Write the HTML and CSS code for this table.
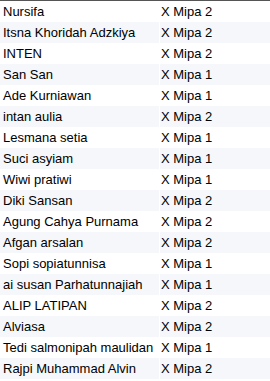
FILE: index.html
```html
<!DOCTYPE html>
<html>
<head>
<meta charset="utf-8">
<link rel="stylesheet" href="styles.css">
</head>
<body>
<div class="table">
  <div class="row"><div class="cell name">Nursifa</div><div class="cell cls">X Mipa 2</div></div>
  <div class="row"><div class="cell name">Itsna Khoridah Adzkiya</div><div class="cell cls">X Mipa 2</div></div>
  <div class="row"><div class="cell name">INTEN</div><div class="cell cls">X Mipa 2</div></div>
  <div class="row"><div class="cell name">San San</div><div class="cell cls">X Mipa 1</div></div>
  <div class="row"><div class="cell name">Ade Kurniawan</div><div class="cell cls">X Mipa 1</div></div>
  <div class="row"><div class="cell name">intan aulia</div><div class="cell cls">X Mipa 2</div></div>
  <div class="row"><div class="cell name">Lesmana setia</div><div class="cell cls">X Mipa 1</div></div>
  <div class="row"><div class="cell name">Suci asyiam</div><div class="cell cls">X Mipa 1</div></div>
  <div class="row"><div class="cell name">Wiwi pratiwi</div><div class="cell cls">X Mipa 1</div></div>
  <div class="row"><div class="cell name">Diki Sansan</div><div class="cell cls">X Mipa 2</div></div>
  <div class="row"><div class="cell name">Agung Cahya Purnama</div><div class="cell cls">X Mipa 2</div></div>
  <div class="row"><div class="cell name">Afgan arsalan</div><div class="cell cls">X Mipa 2</div></div>
  <div class="row"><div class="cell name">Sopi sopiatunnisa</div><div class="cell cls">X Mipa 1</div></div>
  <div class="row"><div class="cell name">ai susan Parhatunnajiah</div><div class="cell cls">X Mipa 1</div></div>
  <div class="row"><div class="cell name">ALIP LATIPAN</div><div class="cell cls">X Mipa 2</div></div>
  <div class="row"><div class="cell name">Alviasa</div><div class="cell cls">X Mipa 2</div></div>
  <div class="row"><div class="cell name">Tedi salmonipah maulidan</div><div class="cell cls">X Mipa 1</div></div>
  <div class="row"><div class="cell name">Rajpi Muhammad Alvin</div><div class="cell cls">X Mipa 2</div></div>
</div>
</body>
</html>
```
FILE: styles.css
```css
html, body {
  margin: 0;
  padding: 0;
  background: #ffffff;
}
body {
  font-family: "Liberation Sans", Arial, sans-serif;
  font-size: 13px;
  color: #000000;
}
.table {
  border-top: 1px solid #555555;
  display: flex;
  flex-direction: column;
}
.row {
  display: grid;
  grid-template-columns: 159px 1fr;
  column-gap: 1px;
  height: 21px;
}
.cell {
  padding-left: 3px;
  line-height: 21px;
  white-space: nowrap;
  overflow: hidden;
}
.cls {
  padding-left: 1px;
}
.row:nth-child(even) .cell {
  background: #f5f7fa;
}
```
